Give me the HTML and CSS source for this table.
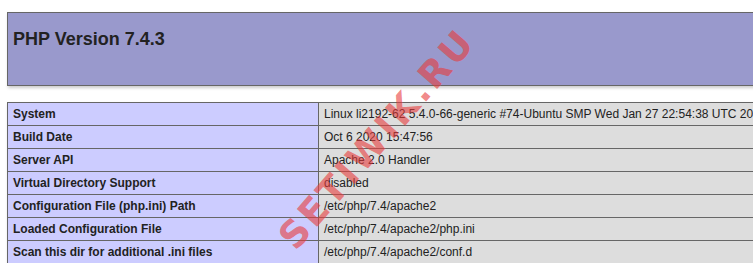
FILE: index.html
```html
<!DOCTYPE html>
<html>
<head>
<meta charset="utf-8">
<link rel="stylesheet" href="styles.css">
</head>
<body>
<div class="page">
  <div class="header">
    <h1 class="title">PHP Version 7.4.3</h1>
  </div>
  <table class="info">
    <tr><td class="e">System</td><td class="v">Linux li2192-62 5.4.0-66-generic #74-Ubuntu SMP Wed Jan 27 22:54:38 UTC 2021 x86_64</td></tr>
    <tr><td class="e">Build Date</td><td class="v">Oct 6 2020 15:47:56</td></tr>
    <tr><td class="e">Server API</td><td class="v">Apache 2.0 Handler</td></tr>
    <tr><td class="e">Virtual Directory Support</td><td class="v">disabled</td></tr>
    <tr><td class="e">Configuration File (php.ini) Path</td><td class="v">/etc/php/7.4/apache2</td></tr>
    <tr><td class="e">Loaded Configuration File</td><td class="v">/etc/php/7.4/apache2/php.ini</td></tr>
    <tr><td class="e">Scan this dir for additional .ini files</td><td class="v">/etc/php/7.4/apache2/conf.d</td></tr>
  </table>
  <div class="watermark">SETIWIK.RU</div>
</div>
</body>
</html>
```

FILE: styles.css
```css
html, body {
  margin: 0;
  padding: 0;
  background: #fff;
  overflow: hidden;
}
body {
  color: #222;
  font-family: "Liberation Sans", Arial, sans-serif;
}
.page {
  position: relative;
  padding: 12px 0 0 7px;
  width: 934px;
}
.header {
  box-sizing: border-box;
  width: 934px;
  height: 74px;
  background: #99c;
  border: 1px solid #666;
  padding: 4px 5px;
  box-shadow: 1px 2px 3px #ccc;
}
.title {
  margin: 12px 0 0 0;
  font-size: 18px;
  line-height: 21px;
  font-weight: bold;
  color: #222;
}
.info {
  margin-top: 16px;
  border-collapse: collapse;
  width: 934px;
  box-shadow: 1px 2px 3px #ccc;
}
.info td {
  border: 1px solid #666;
  font-size: 12px;
  line-height: 14px;
  padding: 4px 5px;
  vertical-align: baseline;
  white-space: nowrap;
  text-align: left;
}
.e {
  background: #ccf;
  width: 300px;
  font-weight: bold;
}
.v {
  background: #ddd;
}
.watermark {
  position: absolute;
  left: 377px;
  top: 139px;
  transform: translate(-50%, -50%) rotate(-49deg);
  font-family: "DejaVu Sans", sans-serif;
  font-size: 37px;
  font-weight: bold;
  letter-spacing: 3px;
  color: rgba(232, 60, 60, 0.62);
  white-space: nowrap;
}
```
